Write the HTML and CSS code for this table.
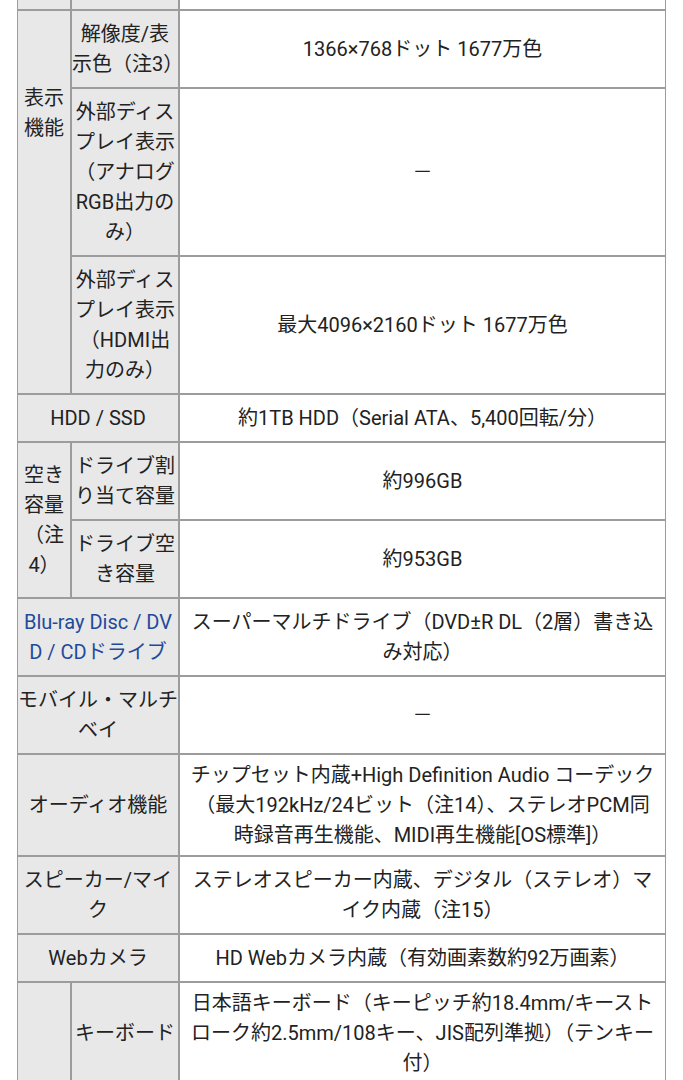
FILE: index.html
```html
<!DOCTYPE html>
<html lang="ja">
<head>
<meta charset="utf-8">
<title>仕様</title>
<link rel="stylesheet" href="styles.css">
</head>
<body>
<table class="spec">
  <colgroup>
    <col class="c1">
    <col class="c2">
    <col class="c3">
  </colgroup>
  <tbody>
    <tr class="cut">
      <th></th>
      <th></th>
      <td></td>
    </tr>
    <tr>
      <th rowspan="3" class="grp-high">表示機能</th>
      <th>解像度/表示色（注3）</th>
      <td>1366×768ドット 1677万色</td>
    </tr>
    <tr>
      <th>外部ディスプレイ表示（アナログRGB出力のみ）</th>
      <td><span class="dash">－</span></td>
    </tr>
    <tr>
      <th>外部ディスプレイ表示（HDMI出力のみ）</th>
      <td>最大4096×2160ドット 1677万色</td>
    </tr>
    <tr>
      <th colspan="2">HDD / SSD</th>
      <td>約1TB HDD（Serial ATA、5,400回転/分）</td>
    </tr>
    <tr>
      <th rowspan="2">空き容量（注4）</th>
      <th>ドライブ割り当て容量</th>
      <td>約996GB</td>
    </tr>
    <tr>
      <th>ドライブ空き容量</th>
      <td>約953GB</td>
    </tr>
    <tr>
      <th colspan="2"><a class="link" href="#">Blu-ray Disc / DVD / CDドライブ</a></th>
      <td>スーパーマルチドライブ（DVD±R DL（2層）書き込み対応）</td>
    </tr>
    <tr>
      <th colspan="2">モバイル・マルチベイ</th>
      <td><span class="dash">－</span></td>
    </tr>
    <tr>
      <th colspan="2">オーディオ機能</th>
      <td>チップセット内蔵+High Definition Audio コーデック（最大192kHz/24ビット（注14）、ステレオPCM同時録音再生機能、MIDI再生機能[OS標準]）</td>
    </tr>
    <tr>
      <th colspan="2">スピーカー/マイク</th>
      <td>ステレオスピーカー内蔵、デジタル（ステレオ）マイク内蔵（注15）</td>
    </tr>
    <tr>
      <th colspan="2">Webカメラ</th>
      <td>HD Webカメラ内蔵（有効画素数約92万画素）</td>
    </tr>
    <tr>
      <th rowspan="3">入力装置</th>
      <th>キーボード</th>
      <td>日本語キーボード（キーピッチ約18.4mm/キーストローク約2.5mm/108キー、JIS配列準拠）（テンキー付）</td>
    </tr>
    <tr>
      <th>ポインティングデバイス</th>
      <td>NXパッド</td>
    </tr>
    <tr>
      <th>タッチパネル</th>
      <td><span class="dash">－</span></td>
    </tr>
  </tbody>
</table>
</body>
</html>
```
FILE: styles.css
```css
html, body {
  margin: 0;
  padding: 0;
  background: #ffffff;
}

body {
  font-family: Roboto, "Noto Sans CJK JP", sans-serif;
  font-size: 20px;
  line-height: 30px;
  color: #222222;
}

.spec {
  margin-left: 17px;
  width: 649px;
  table-layout: fixed;
  border-collapse: separate;
  border-spacing: 0;
}

.spec .c1 { width: 54px; }
.spec .c2 { width: 108px; }
.spec .c3 { width: 487px; }

.spec th,
.spec td {
  border: 1px solid #9c9c9c;
  text-align: center;
  vertical-align: middle;
  word-break: break-all;
}

.spec th {
  background: #e8e8e8;
  font-weight: normal;
  padding: 8px 0;
}

.spec td {
  background: #ffffff;
  padding: 5px 6px;
}

.spec .cut th,
.spec .cut td {
  border-top: 0;
  height: 9px;
  padding: 0;
}

.spec th.grp-high {
  vertical-align: top;
  padding-top: 72px;
}

.link {
  color: #1f4a9c;
  text-decoration: none;
}

.dash {
  color: #222222;
}
```
